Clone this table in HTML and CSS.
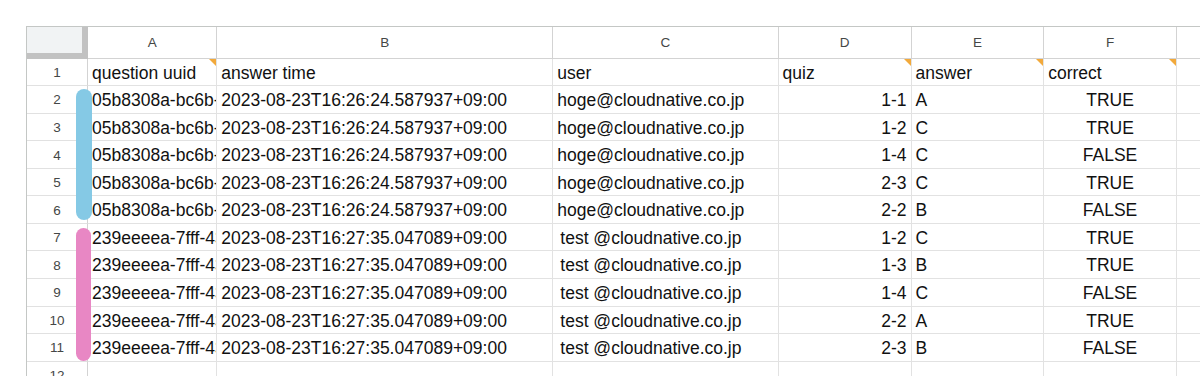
FILE: index.html
```html
<!DOCTYPE html>
<html lang="ja">
<head>
<meta charset="utf-8">
<title>Sheet</title>
<link rel="stylesheet" href="styles.css">
</head>
<body>
<div class="sheet">
  <div class="corner"></div>
  <div class="ch">A</div><div class="ch">B</div><div class="ch">C</div><div class="ch">D</div><div class="ch">E</div><div class="ch">F</div><div class="ch"></div>

  <div class="rh">1</div>
  <div class="c note">question uuid</div><div class="c">answer time</div><div class="c">user</div><div class="c note">quiz</div><div class="c note">answer</div><div class="c note">correct</div><div class="c"></div>

  <div class="rh">2</div>
  <div class="c">05b8308a-bc6b-4e2d-9f41-7a0c3b5e8d21</div><div class="c">2023-08-23T16:26:24.587937+09:00</div><div class="c">hoge@cloudnative.co.jp</div><div class="c num">1-1</div><div class="c">A</div><div class="c ctr">TRUE</div><div class="c"></div>

  <div class="rh">3</div>
  <div class="c">05b8308a-bc6b-4e2d-9f41-7a0c3b5e8d21</div><div class="c">2023-08-23T16:26:24.587937+09:00</div><div class="c">hoge@cloudnative.co.jp</div><div class="c num">1-2</div><div class="c">C</div><div class="c ctr">TRUE</div><div class="c"></div>

  <div class="rh">4</div>
  <div class="c">05b8308a-bc6b-4e2d-9f41-7a0c3b5e8d21</div><div class="c">2023-08-23T16:26:24.587937+09:00</div><div class="c">hoge@cloudnative.co.jp</div><div class="c num">1-4</div><div class="c">C</div><div class="c ctr">FALSE</div><div class="c"></div>

  <div class="rh">5</div>
  <div class="c">05b8308a-bc6b-4e2d-9f41-7a0c3b5e8d21</div><div class="c">2023-08-23T16:26:24.587937+09:00</div><div class="c">hoge@cloudnative.co.jp</div><div class="c num">2-3</div><div class="c">C</div><div class="c ctr">TRUE</div><div class="c"></div>

  <div class="rh">6</div>
  <div class="c">05b8308a-bc6b-4e2d-9f41-7a0c3b5e8d21</div><div class="c">2023-08-23T16:26:24.587937+09:00</div><div class="c">hoge@cloudnative.co.jp</div><div class="c num">2-2</div><div class="c">B</div><div class="c ctr">FALSE</div><div class="c"></div>

  <div class="rh">7</div>
  <div class="c">239eeeea-7fff-4321-8b6a-0d2c9e1f4a57</div><div class="c">2023-08-23T16:27:35.047089+09:00</div><div class="c indent">test @cloudnative.co.jp</div><div class="c num">1-2</div><div class="c">C</div><div class="c ctr">TRUE</div><div class="c"></div>

  <div class="rh">8</div>
  <div class="c">239eeeea-7fff-4321-8b6a-0d2c9e1f4a57</div><div class="c">2023-08-23T16:27:35.047089+09:00</div><div class="c indent">test @cloudnative.co.jp</div><div class="c num">1-3</div><div class="c">B</div><div class="c ctr">TRUE</div><div class="c"></div>

  <div class="rh">9</div>
  <div class="c">239eeeea-7fff-4321-8b6a-0d2c9e1f4a57</div><div class="c">2023-08-23T16:27:35.047089+09:00</div><div class="c indent">test @cloudnative.co.jp</div><div class="c num">1-4</div><div class="c">C</div><div class="c ctr">FALSE</div><div class="c"></div>

  <div class="rh">10</div>
  <div class="c">239eeeea-7fff-4321-8b6a-0d2c9e1f4a57</div><div class="c">2023-08-23T16:27:35.047089+09:00</div><div class="c indent">test @cloudnative.co.jp</div><div class="c num">2-2</div><div class="c">A</div><div class="c ctr">TRUE</div><div class="c"></div>

  <div class="rh">11</div>
  <div class="c">239eeeea-7fff-4321-8b6a-0d2c9e1f4a57</div><div class="c">2023-08-23T16:27:35.047089+09:00</div><div class="c indent">test @cloudnative.co.jp</div><div class="c num">2-3</div><div class="c">B</div><div class="c ctr">FALSE</div><div class="c"></div>

  <div class="rh">12</div>
  <div class="c"></div><div class="c"></div><div class="c"></div><div class="c"></div><div class="c"></div><div class="c"></div><div class="c"></div>

  <div class="bar bar-blue"></div>
  <div class="bar bar-pink"></div>
</div>
</body>
</html>
```
FILE: styles.css
```css
html, body {
  margin: 0;
  padding: 0;
  background: #ffffff;
  overflow: hidden;
  height: 376px;
}

body {
  padding: 26px 0 0 26px;
  box-sizing: border-box;
  font-family: "Liberation Sans", Arial, sans-serif;
}

.sheet {
  position: relative;
  display: grid;
  grid-template-columns: 61px 129.3px 336px 225.3px 133px 132.6px 132.7px 60px;
  grid-template-rows: 31.6px;
  grid-auto-rows: 27.56px;
  border-top: 1px solid #c4c7c5;
  border-left: 1px solid #c4c7c5;
  width: max-content;
}

.corner {
  background: #f1f3f4;
  border-right: 6px solid #c2c2c2;
  border-bottom: 6px solid #c2c2c2;
  box-sizing: border-box;
}

.ch {
  display: flex;
  align-items: center;
  justify-content: center;
  border-right: 1px solid #d3d3d3;
  border-bottom: 1px solid #d3d3d3;
  box-sizing: border-box;
  font-size: 13.5px;
  color: #444746;
}

.rh {
  display: flex;
  align-items: center;
  justify-content: center;
  border-right: 1px solid #d3d3d3;
  border-bottom: 1px solid #e1e1e1;
  box-sizing: border-box;
  font-size: 13.5px;
  color: #444746;
  padding-top: 1px;
}

.c {
  position: relative;
  display: flex;
  align-items: flex-end;
  padding: 0 4px 1.5px 4px;
  border-right: 1px solid #e2e2e2;
  border-bottom: 1px solid #e2e2e2;
  box-sizing: border-box;
  overflow: hidden;
  white-space: nowrap;
  font-size: 17.5px;
  color: #111111;
}

.num {
  justify-content: flex-end;
}

.ctr {
  justify-content: center;
}

.indent {
  padding-left: 7px;
}

.note::after {
  content: "";
  position: absolute;
  top: 0;
  right: 0;
  border-top: 7px solid #f2a93b;
  border-left: 7px solid transparent;
}

.bar {
  position: absolute;
  left: 49px;
  width: 16px;
  border-radius: 8px;
}

.bar-blue {
  top: 61.5px;
  height: 131px;
  background: #85c9e5;
}

.bar-pink {
  top: 200.5px;
  height: 133px;
  width: 15px;
  background: #e887c4;
}
```
